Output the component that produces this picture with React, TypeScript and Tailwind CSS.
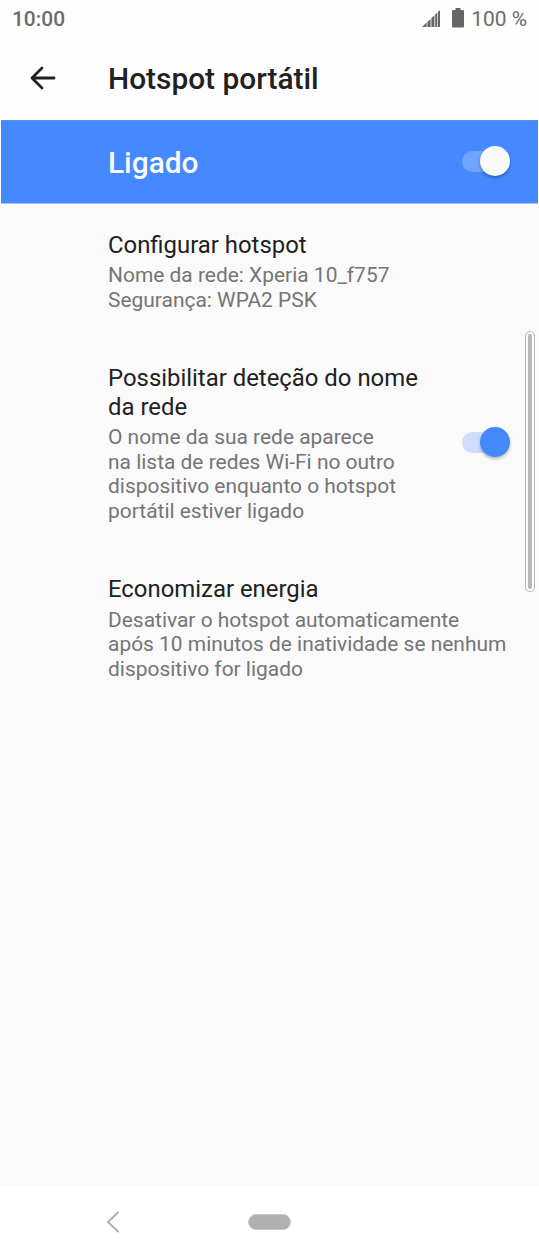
function Switch({ onBlue = false }: { onBlue?: boolean }) {
  return (
    <span role="switch" aria-checked="true" className={`flex h-[21px] w-[48px] shrink-0 items-center justify-end rounded-full ${onBlue ? "-mt-[2px] bg-[linear-gradient(to_right,#6fa4ff_60%,transparent_60%)]" : "-mt-[3px] bg-[linear-gradient(to_right,#cdddfb_60%,transparent_60%)]"}`}>
      <span className={`h-[30px] w-[30px] shrink-0 rounded-full shadow-[0_2px_3px_rgba(0,0,0,0.28)] ${onBlue ? "bg-[#fafafa]" : "bg-[#4489f9]"}`} />
    </span>
  );
}

function Setting({ title, lines }: { title: string[]; lines: string[] }) {
  return (
    <div className="flex flex-col">
      <h2 className="text-[23.9px] leading-[28.5px] whitespace-nowrap">
        {title.map((t) => <span key={t} className="block">{t}</span>)}
      </h2>
      <p className="mt-[3.9px] text-[20.94px] leading-[24.5px] whitespace-nowrap text-[#757575]">
        {lines.map((t) => <span key={t} className="block">{t}</span>)}
      </p>
    </div>
  );
}

export default function App() {
  return (
    <div className="relative flex h-[1258px] w-[539px] flex-col overflow-hidden bg-[#fafafa] font-['Roboto',sans-serif] text-[#212121]">
      <div className="flex h-[38px] shrink-0 items-center bg-[#fdfdfd] px-[12px] text-[20.9px] text-[#6b6b6b]">
        <span className="pt-[2px] font-medium">10:00</span>
        <svg className="mt-[-1px] ml-auto" width="18" height="17" viewBox="0 0 18 17" fill="#656565">
          <path d="M0 17L4.6 12.6V17ZM5.4 11.9L8.6 8.9V17H5.4ZM9.4 8.1L12.4 5.3V17H9.4ZM13.2 4.5L15.3 2.5V17H13.2ZM16 1.9L18 0V17H16Z" />
        </svg>
        <svg className="mt-[-2px] mr-[7px] ml-[12px]" width="12" height="20" viewBox="0 0 12 20" fill="#656565"><path d="M3.5 0h5v2h2.5a1 1 0 0 1 1 1v15.5a1 1 0 0 1-1 1H1a1 1 0 0 1-1-1V3a1 1 0 0 1 1-1h2.5z" /></svg>
        <span className="pt-[2px]">100 %</span>
      </div>
      <header className="flex h-[82px] shrink-0 items-center bg-[#fdfdfd] pl-[30px]">
        <svg className="-mt-[2px]" width="26" height="24" viewBox="0 0 26 24" fill="none" stroke="#212121" strokeWidth="2.8" strokeLinecap="round" strokeLinejoin="round"><path d="M24 12H2M12 2L2 12L12 22" /></svg>
        <h1 className="ml-[52px] text-[29.85px] font-medium">Hotspot portátil</h1>
      </header>
      <section className="mx-px flex h-[84px] shrink-0 items-center justify-between border-t border-b border-t-[#5b8fe0] border-b-[#a0c2fc] bg-[#4489ff] pr-[28px] pl-[107px] text-[29.85px] font-medium text-[#fafafa]">
        <span className="pt-[3px]">Ligado</span>
        <Switch onBlue />
      </section>
      <main className="flex grow flex-col gap-[52px] pt-[27px] pl-[108px]">
        <Setting title={["Configurar hotspot"]} lines={["Nome da rede: Xperia 10_f757", "Segurança: WPA2 PSK"]} />
        <div className="flex items-center justify-between pr-[29px]">
          <Setting title={["Possibilitar deteção do nome", "da rede"]} lines={["O nome da sua rede aparece", "na lista de redes Wi-Fi no outro", "dispositivo enquanto o hotspot", "portátil estiver ligado"]} />
          <Switch />
        </div>
        <Setting title={["Economizar energia"]} lines={["Desativar o hotspot automaticamente", "após 10 minutos de inatividade se nenhum", "dispositivo for ligado"]} />
      </main>
      <nav className="flex h-[72px] shrink-0 items-center bg-white pl-[106px]">
        <svg width="14" height="22" viewBox="0 0 14 22" fill="none" stroke="#b0b0b0" strokeWidth="2" strokeLinecap="round" strokeLinejoin="round"><path d="M12 1.5L2 11L12 20.5" /></svg>
        <span className="ml-[128px] h-[16px] w-[43px] rounded-full border border-[#c8c8c8] bg-[#b0b0b0]" />
      </nav>
      <span className="absolute top-[331px] left-[525px] flex h-[261px] w-[10px] justify-center rounded-full border border-[#b4b4b4] bg-white py-[2px]">
        <span className="w-[4px] rounded-full bg-[#b8b8b8]" />
      </span>
    </div>
  );
}
